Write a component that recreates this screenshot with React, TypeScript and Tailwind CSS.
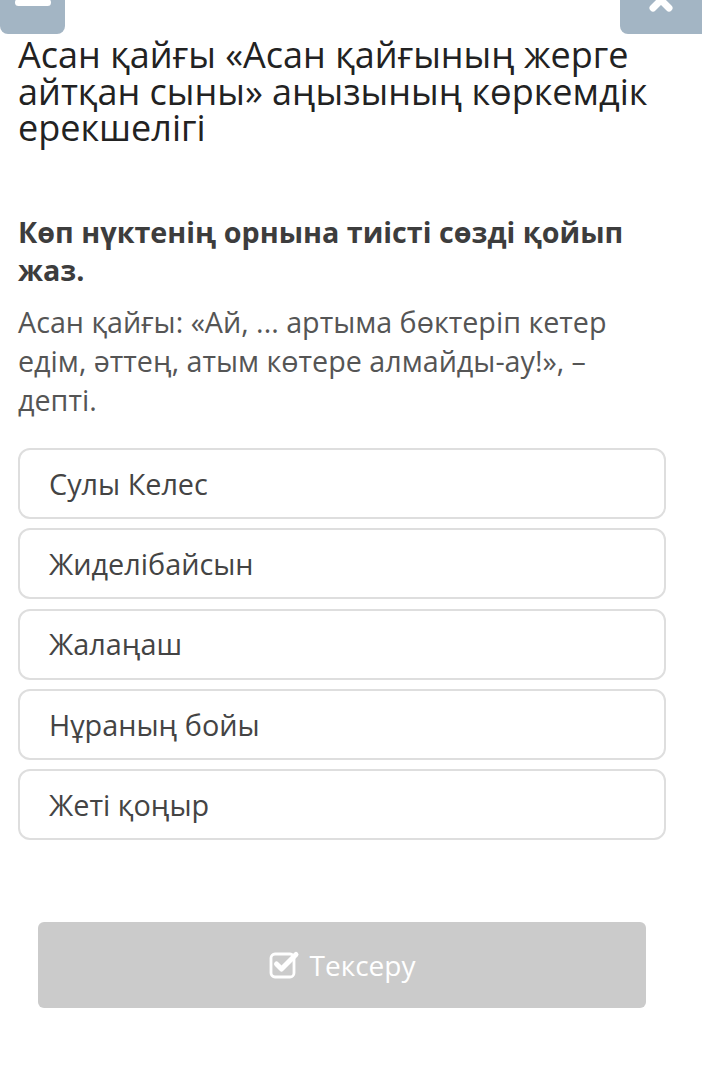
import React from "react";

const options = ["Сулы Келес", "Жиделібайсын", "Жалаңаш", "Нұраның бойы", "Жеті қоңыр"];

export default function App() {
  return (
    <div className="relative w-[702px] h-[1071px] bg-white overflow-hidden" style={{ fontFamily: "'Open Sans', 'Noto Sans', sans-serif" }}>
      <div className="flex justify-between">
        <div className="w-[65px] h-[34px] bg-[#a3b5c4] rounded-b-[8px] flex justify-center">
          <div className="w-[36px] h-[7px] bg-white mt-[-1px] rounded-sm" />
        </div>
        <div className="w-[82px] h-[34px] bg-[#a3b5c4] rounded-bl-[8px] flex justify-center">
          <svg width="34" height="16" viewBox="0 0 34 16">
            <path d="M9 -8 L25 8 M25 -8 L9 8" stroke="white" strokeWidth="7" strokeLinecap="round" />
          </svg>
        </div>
      </div>
      <h1 className="px-[18px] mt-[3px] text-[36px] leading-[36.5px] text-[#222] font-normal">
        Асан қайғы «Асан қайғының жерге айтқан сыны» аңызының көркемдік ерекшелігі
      </h1>
      <p className="px-[18px] mt-[66px] text-[28.7px] leading-[38px] font-bold text-[#3d3d3d] pr-[40px]">
        Көп нүктенің орнына тиісті сөзді қойып жаз.
      </p>
      <p className="px-[18px] mt-[13px] text-[28.7px] leading-[39px] text-[#555] pr-[50px]">
        Асан қайғы: «Ай, ... артыма бөктеріп кетер едім, әттең, атым көтере алмайды-ау!», – депті.
      </p>
      <div className="mt-[29.5px] ml-[18px] w-[648px] flex flex-col gap-[9.25px]">
        {options.map((o) => (
          <div key={o} className="h-[71px] border-2 border-[#dedede] rounded-[12px] flex items-center pl-[29px] text-[28.8px] text-[#444]">
            {o}
          </div>
        ))}
      </div>
      <div className="mt-[82px] mx-[38px] w-[608px] h-[86px] bg-[#cbcbcb] rounded-[6px] flex items-center justify-center gap-[10px] text-white text-[28px]">
        <svg width="31" height="29" viewBox="0 0 31 29" className="mt-[-2px]">
          <rect x="2" y="4" width="23" height="23" rx="4" fill="none" stroke="white" strokeWidth="2.8" />
          <path d="M7.5 14 L12.5 19 L27 4.5" fill="none" stroke="white" strokeWidth="5" strokeLinecap="round" strokeLinejoin="round" />
        </svg>
        <span>Тексеру</span>
      </div>
    </div>
  );
}
